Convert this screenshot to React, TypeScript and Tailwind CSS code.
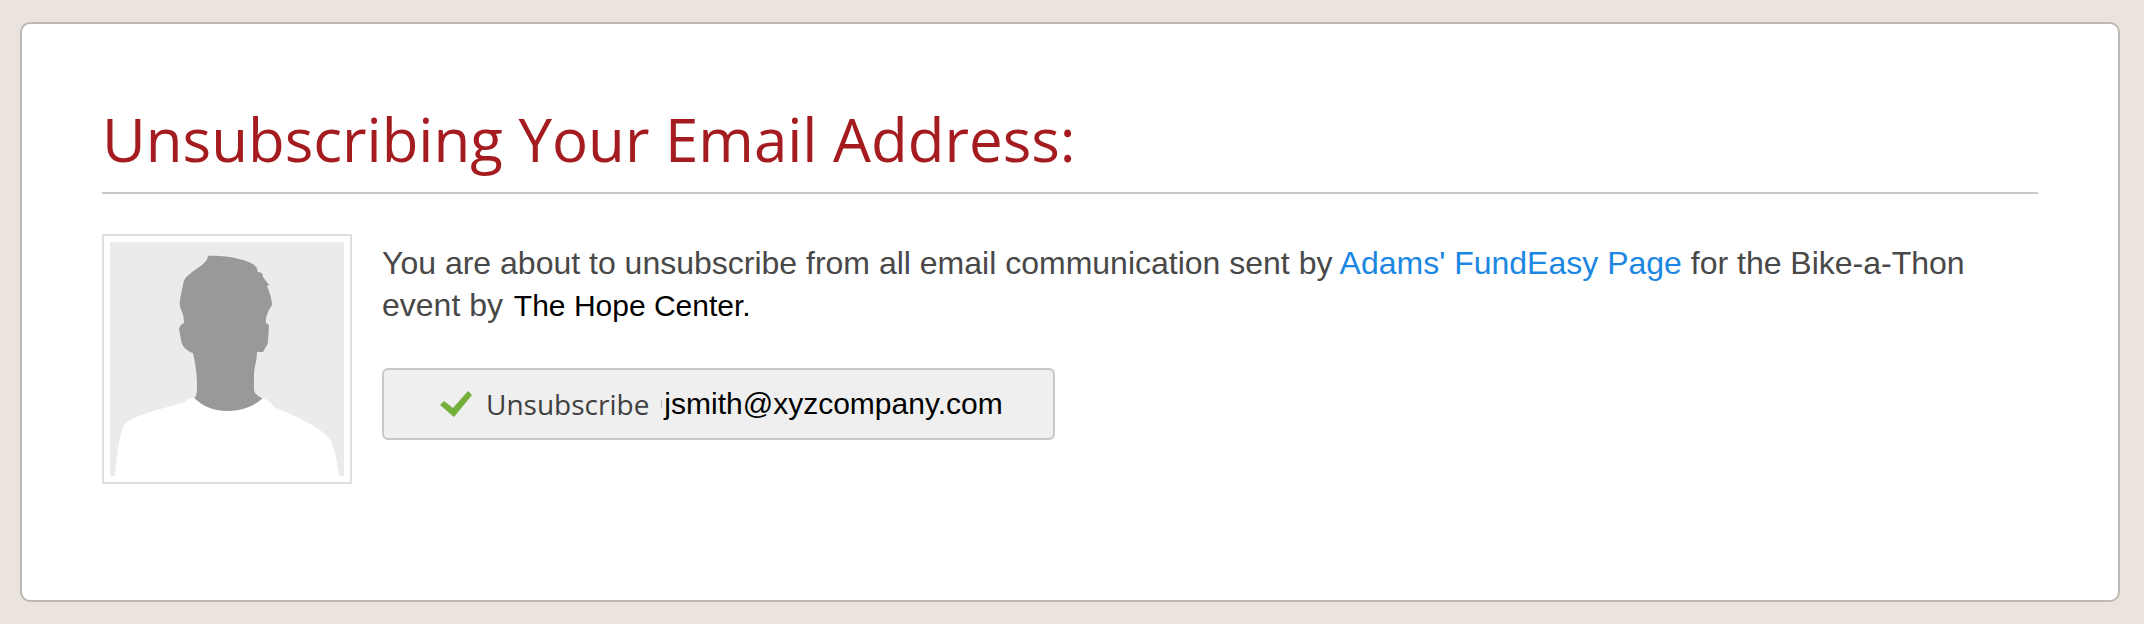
interface Unsubscription {
  pageName: string;
  eventName: string;
  organization: string;
  email: string;
}

const details: Unsubscription = {
  pageName: "Adams' FundEasy Page",
  eventName: 'Bike-a-Thon',
  organization: 'The Hope Center.',
  email: 'jsmith@xyzcompany.com',
};

function Avatar() {
  return (
    <div className="shrink-0 border-2 border-[#dfdfdf] bg-white p-1">
      <svg viewBox="0 0 234 234" className="m-0.5 block size-[234px]" aria-hidden="true">
        <rect width="234" height="234" fill="#ebebeb" />
        {/* Head and neck */}
        <path
          fill="#999999"
          d="M98 14C116 13 141 18 146 25C148 27 147 29 148 30L152 31L153 35L159 43L157 44C160 51 162 58 162 63C158 69 155 76 156 81L159 83L158 99C158 103 155 106 153 110L147 110C147 119 144 126 144 133V148C145 153 149 154 153 157L153 172H84V157C87 154 87 149 87 143C87 131 85 120 83 111C77 109 72 105 71 98L69 87C70 84 71 82 74 81C74 73 72 70 70 65C69 58 72 49 73 43C74 35 78 34 82 30C90 24 97 21 98 14Z"
        />
        {/* Shirt */}
        <path
          fill="#ffffff"
          d="M5 234C7 211 9 195 14 183C22 173 56 166 75 160C77 157 80 156 84 156C93 164 103 169 117 169C133 169 144 164 153 156C158 158 161 161 164 165C182 173 211 184 221 199C225 207 227 220 229 234Z"
        />
      </svg>
    </div>
  );
}

function CheckIcon() {
  return (
    <svg viewBox="0 0 32 26" className="h-[26px] w-8 shrink-0" aria-hidden="true">
      <path fill="#74b13c" d="M0 14L4 10L13 17L28 0L32 4L14 26Z" />
    </svg>
  );
}

export default function App() {
  return (
    <main className="min-h-screen bg-[#ebe4de] pt-[22px] pr-6 pb-[22px] pl-5 font-['Liberation_Sans',sans-serif]">
      <section className="rounded-[10px] border-2 border-[#bcb9b4] bg-white px-20 pt-20 pb-[116px]">
        <h1 className="border-b-2 border-[#c8c8c8] pb-[18px] font-['Open_Sans',sans-serif] text-[60px] leading-[70px] text-[#a51c20]">
          Unsubscribing Your Email Address:
        </h1>

        <div className="mt-10 flex items-start gap-[30px]">
          <Avatar />

          <div className="min-w-0 flex-1 pt-2">
            <p className="text-[32px] leading-[42px] text-[#484848]">
              You are about to unsubscribe from all email communication sent by{' '}
              <a href="#page" className="text-[#1b87e3]">{details.pageName}</a> for the {details.eventName} event by{' '}
              <span className="pl-0.5 text-[30px] leading-none text-black">{details.organization}</span>
            </p>

            <button
              type="button"
              className="mt-[42px] flex h-[72px] items-center rounded-md border-2 border-[#c8c8c8] bg-[#efefef] pr-[50px] pl-14"
            >
              <CheckIcon />
              <span className="pl-3.5 font-['Open_Sans',sans-serif] text-[28px] leading-9 text-[#404040]">Unsubscribe</span>
              <span className="ml-3 h-2 w-px bg-[#b4b4b4]" aria-hidden="true" />
              <span className="pl-0.5 text-[30px] leading-9 text-black">{details.email}</span>
            </button>
          </div>
        </div>
      </section>
    </main>
  );
}
